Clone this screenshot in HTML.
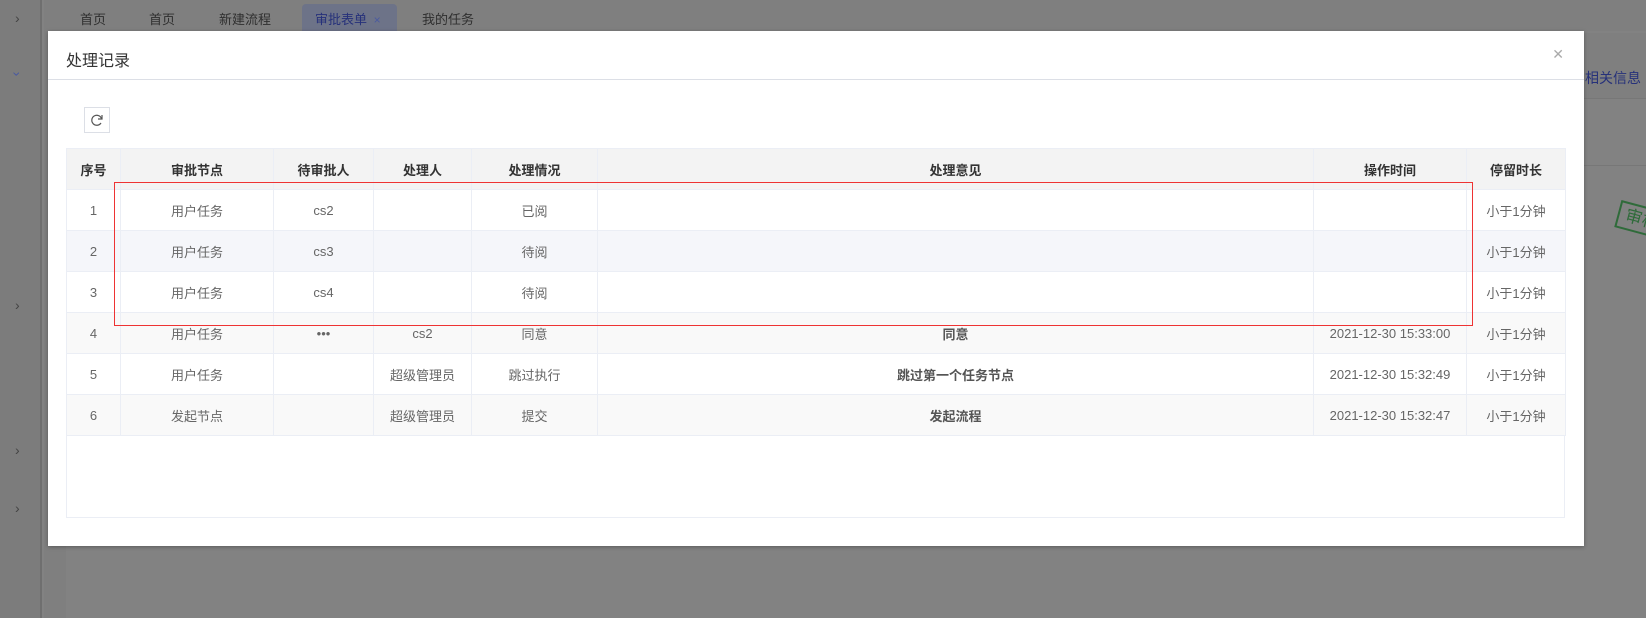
<!DOCTYPE html>
<html><head><meta charset="utf-8"><style>
*{margin:0;padding:0;box-sizing:border-box}
body{width:1646px;height:618px;overflow:hidden;background:#828282;font-family:"Liberation Sans","Noto Sans CJK SC",sans-serif;position:relative;font-size:13px;color:#666}
.side{position:absolute;left:0;top:0;width:42px;height:618px;background:#7c7c7c;border-right:2px solid #6f6f6f}
.chev{position:absolute;left:15px;color:#444;font-size:14px}
.strip{position:absolute;left:44px;top:0;width:22px;height:618px;background:#7f7f7f}
.tabs{position:absolute;left:44px;top:0;right:0;height:31px;background:#7f7f7f}
.tab{position:absolute;top:9px;font-size:13px;color:#2f2f2f}
.act{position:absolute;left:258px;top:4px;width:95px;height:27px;background:#6d7388;border-radius:4px 4px 0 0}
.modal{position:absolute;left:48px;top:31px;width:1536px;height:515px;background:#fff;box-shadow:0 1px 4px rgba(0,0,0,.3)}
.title{position:absolute;left:18px;top:16px;font-size:16px;color:#333}
.hl{position:absolute;left:0;right:0;top:48px;border-top:1px solid #dcdfe6}
.x{position:absolute;right:20px;top:15px;font-size:14px;color:#aaa}
.btn{position:absolute;left:36px;top:76px;width:26px;height:26px;border:1px solid #dcdfe6}
table{position:absolute;left:18px;top:117px;border-collapse:collapse;width:1499px;table-layout:fixed}
td,th{border:1px solid #ebeef5;height:41px;text-align:center;font-size:13px;white-space:nowrap;overflow:hidden}
th{background:#f3f3f3;color:#333;font-weight:bold}
tr.s td{background:#f5f6fa}
tr.g td{background:#f9f9f9}
b{color:#555}
.empty{position:absolute;left:18px;top:404px;width:1499px;height:83px;border:1px solid #ebeef5;border-top:none}
.red{position:absolute;left:114px;top:182px;width:1359px;height:144px;border:1px solid #e33}
</style></head><body>
<div class="side"></div>
<div class="chev" style="top:10px">›</div>
<div class="chev" style="top:66px;transform:rotate(90deg);color:#4a5aa0">›</div>
<div class="chev" style="top:297px">›</div>
<div class="chev" style="top:442px">›</div>
<div class="chev" style="top:500px">›</div>
<div class="strip"></div>
<div class="tabs">
<div class="tab" style="left:36px">首页</div>
<div class="tab" style="left:105px">首页</div>
<div class="tab" style="left:175px">新建流程</div>
<div class="act"></div>
<div class="tab" style="left:271px;color:#26317a">审批表单 <span style="font-size:12px;color:#4a5aa0;margin-left:3px">×</span></div>
<div class="tab" style="left:378px">我的任务</div>
</div>
<div style="position:absolute;left:1584px;top:33px;width:62px;height:66px;background:#7f7f7f;border-bottom:1px solid #777"></div>
<div style="position:absolute;left:1585px;top:68px;color:#26317a;font-size:14px">相关信息</div>
<div style="position:absolute;left:1584px;top:165px;width:62px;border-top:1px solid #777"></div>
<div style="position:absolute;left:1617px;top:206px;width:50px;height:28px;border:2px solid #2f6b3a;transform:rotate(15deg);color:#2f6b3a;font-size:17px;padding-left:6px;white-space:nowrap;line-height:24px">审核</div>
<div class="modal">
<div class="title">处理记录</div>
<div class="x">✕</div>
<div class="hl"></div>
<div class="btn"><svg width="24" height="24" viewBox="0 0 24 24"><path d="M16.5 10.5A5 5 0 1 0 16 15" fill="none" stroke="#555" stroke-width="1.2"/><path d="M17 7v4h-4" fill="none" stroke="#555" stroke-width="1.2"/></svg></div>
<table>
<colgroup><col style="width:54px"><col style="width:153px"><col style="width:100px"><col style="width:98px"><col style="width:126px"><col style="width:716px"><col style="width:153px"><col style="width:99px"></colgroup>
<tr><th>序号</th><th>审批节点</th><th>待审批人</th><th>处理人</th><th>处理情况</th><th>处理意见</th><th>操作时间</th><th>停留时长</th></tr>
<tr><td>1</td><td>用户任务</td><td>cs2</td><td></td><td>已阅</td><td></td><td></td><td>小于1分钟</td></tr>
<tr class="s"><td>2</td><td>用户任务</td><td>cs3</td><td></td><td>待阅</td><td></td><td></td><td>小于1分钟</td></tr>
<tr><td>3</td><td>用户任务</td><td>cs4</td><td></td><td>待阅</td><td></td><td></td><td>小于1分钟</td></tr>
<tr class="g"><td>4</td><td>用户任务</td><td>•••</td><td>cs2</td><td>同意</td><td><b>同意</b></td><td>2021-12-30 15:33:00</td><td>小于1分钟</td></tr>
<tr><td>5</td><td>用户任务</td><td></td><td>超级管理员</td><td>跳过执行</td><td><b>跳过第一个任务节点</b></td><td>2021-12-30 15:32:49</td><td>小于1分钟</td></tr>
<tr class="g"><td>6</td><td>发起节点</td><td></td><td>超级管理员</td><td>提交</td><td><b>发起流程</b></td><td>2021-12-30 15:32:47</td><td>小于1分钟</td></tr>
</table>
<div class="empty"></div>
</div>
<div class="red"></div>
</body></html>
